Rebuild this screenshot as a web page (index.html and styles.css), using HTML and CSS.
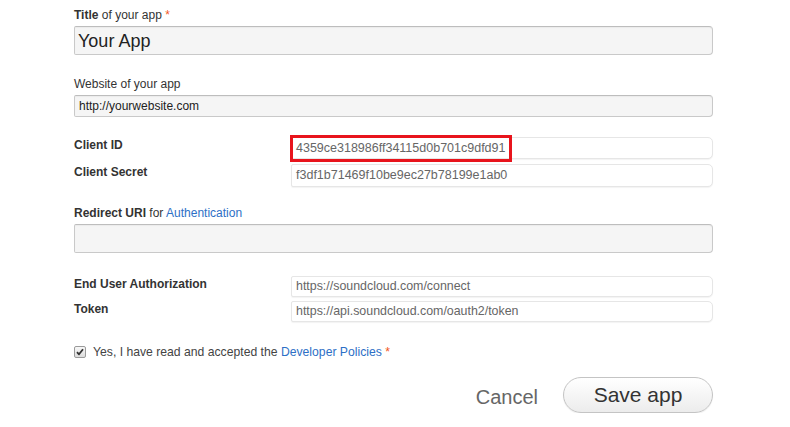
FILE: index.html
```html
<!DOCTYPE html>
<html>
<head>
<meta charset="utf-8">
<link rel="stylesheet" href="styles.css">
</head>
<body>
<form class="app-form">
  <div class="field field-title">
    <label class="label"><b>Title</b> of your app <span class="req">*</span></label>
    <div class="input input-lg">Your App</div>
  </div>
  <div class="field field-website">
    <label class="label">Website of your app</label>
    <div class="input input-sm">http://yourwebsite.com</div>
  </div>
  <div class="pair pair-client">
    <div class="pair-row">
      <span class="pair-label">Client ID</span>
      <div class="ro-input">4359ce318986ff34115d0b701c9dfd91<span class="highlight"></span></div>
    </div>
    <div class="pair-row">
      <span class="pair-label">Client Secret</span>
      <div class="ro-input ro-tall">f3df1b71469f10be9ec27b78199e1ab0</div>
    </div>
  </div>
  <div class="field field-redirect">
    <label class="label"><b>Redirect URI</b> for <a class="link" href="#">Authentication</a></label>
    <div class="input input-lg"></div>
  </div>
  <div class="pair pair-auth">
    <div class="pair-row">
      <span class="pair-label">End User Authorization</span>
      <div class="ro-input ro-short">https://soundcloud.com/connect</div>
    </div>
    <div class="pair-row">
      <span class="pair-label">Token</span>
      <div class="ro-input ro-short">https://api.soundcloud.com/oauth2/token</div>
    </div>
  </div>
  <div class="agree">
    <span class="checkbox"><svg width="8" height="8" viewBox="0 0 8 8"><path d="M1 4.2 L3 6.3 L7 1.2" fill="none" stroke="#333" stroke-width="1.8" stroke-linejoin="round"/></svg></span>
    <span class="agree-text">Yes, I have read and accepted the <a class="link" href="#">Developer Policies</a> <span class="req">*</span></span>
  </div>
  <div class="actions">
    <a class="cancel" href="#">Cancel</a>
    <button type="button" class="save">Save app</button>
  </div>
</form>
</body>
</html>
```
FILE: styles.css
```css
html, body {
  margin: 0;
  padding: 0;
  background: #ffffff;
}
body {
  font-family: "Liberation Sans", Arial, sans-serif;
  font-size: 12px;
  color: #333;
}
.app-form {
  width: 639px;
  margin-left: 74px;
  padding-top: 7px;
}
.field {
  display: flex;
  flex-direction: column;
  gap: 3px;
}
.label {
  line-height: 16px;
  color: #333;
}
.label b {
  font-weight: bold;
}
.req {
  color: #f2581f;
}
.link {
  color: #2d6fc6;
  text-decoration: none;
}
.input {
  box-sizing: border-box;
  border: 1px solid #c9c9c9;
  border-top-color: #bdbdbd;
  border-radius: 2px 4px 4px 2px;
  background: #f5f5f5;
  box-shadow: inset 0 1px 1px rgba(0,0,0,0.04);
  color: #222;
  padding: 0 4px;
}
.input-lg {
  height: 29px;
  font-size: 18px;
  line-height: 28px;
  padding-left: 3px;
}
.input-sm {
  height: 22px;
  line-height: 20px;
  font-size: 12px;
}
.field-website {
  margin-top: 21px;
}
.pair {
  display: flex;
  flex-direction: column;
}
.pair-client {
  margin-top: 20px;
  gap: 5px;
}
.pair-auth {
  margin-top: 23px;
  gap: 4px;
}
.pair-row {
  display: grid;
  grid-template-columns: 217px 1fr;
  align-items: start;
}
.pair-label {
  font-weight: bold;
  line-height: 17px;
  color: #333;
}
.ro-input {
  position: relative;
  box-sizing: border-box;
  height: 22px;
  line-height: 20px;
  border: 1px solid #e6e6e6;
  border-radius: 2px 5px 5px 2px;
  background: #fff;
  box-shadow: 0 1px 1px rgba(0,0,0,0.05);
  color: #666;
  padding: 0 4px;
  font-size: 12.5px;
}
.ro-tall {
  height: 23px;
  line-height: 21px;
}
.ro-short {
  height: 21px;
  line-height: 19px;
  font-size: 12.4px;
}
.highlight {
  position: absolute;
  left: -2px;
  top: -3px;
  width: 222px;
  height: 27px;
  box-sizing: border-box;
  border: 3px solid #e8141c;
}
.field-redirect {
  margin-top: 18px;
}
.agree {
  margin-top: 22px;
  display: flex;
  align-items: center;
  gap: 7px;
  line-height: 16px;
}
.checkbox {
  box-sizing: border-box;
  width: 12px;
  height: 12px;
  border: 1px solid #9a9a9a;
  border-radius: 2px;
  background: linear-gradient(#f8f8f8, #dcdcdc);
  display: flex;
  align-items: center;
  justify-content: center;
}
.checkbox svg {
  display: block;
}
.agree-text {
  color: #444;
  font-size: 12.2px;
}
.actions {
  margin-top: 17px;
  display: flex;
  justify-content: flex-end;
  align-items: center;
  gap: 25px;
}
.cancel {
  font-size: 20px;
  line-height: 24px;
  padding-top: 3px;
  color: #666;
  text-decoration: none;
}
.save {
  box-sizing: border-box;
  width: 150px;
  height: 36px;
  border: 1px solid #c4c4c4;
  border-radius: 18px;
  background: linear-gradient(#ffffff, #ececec);
  font-family: "Liberation Sans", Arial, sans-serif;
  font-size: 21px;
  color: #333;
  padding: 0;
  box-shadow: 0 1px 1px rgba(0,0,0,0.06);
}
```
